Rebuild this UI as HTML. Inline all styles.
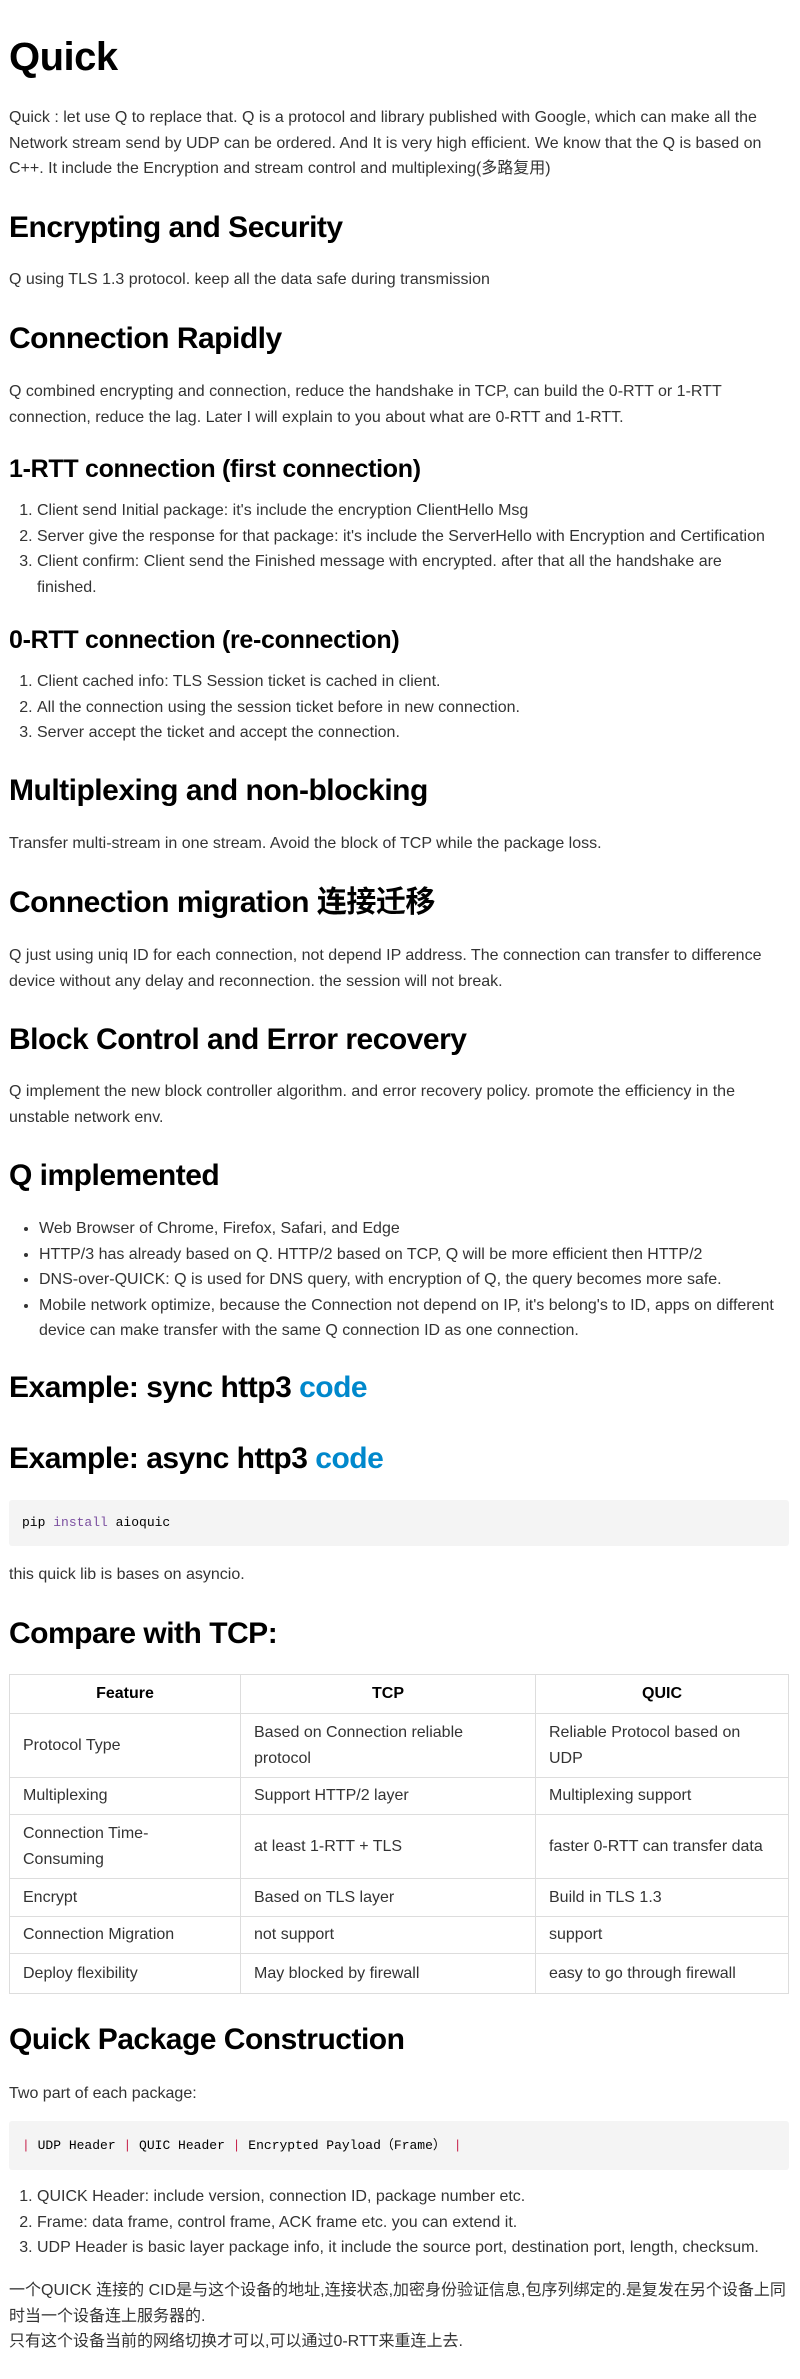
<!DOCTYPE html>
<html><head><meta charset="utf-8"><style>
*{margin:0;padding:0;box-sizing:border-box}
html,body{width:800px;height:2379px;background:#fff;overflow:hidden}
body{position:relative;font-family:"Liberation Sans","Noto Sans CJK SC",sans-serif;color:#333;font-size:16px;line-height:25.5px}
.b{position:absolute;left:9px;width:780px}
h1{font-size:40px;line-height:48px;color:#000;font-weight:bold;letter-spacing:-0.5px}
h2{font-size:30px;line-height:36px;color:#000;font-weight:bold;letter-spacing:-0.5px}
h3{font-size:25px;line-height:30px;color:#000;font-weight:bold;letter-spacing:-0.3px}
a{color:#0088cc;text-decoration:none}
ol,ul{padding-left:28px}
ul{padding-left:30px}
.code{position:absolute;left:9px;width:780px;background:#f4f4f4;border-radius:3px;font-family:"Liberation Mono","Noto Sans CJK SC",monospace;font-size:13px;color:#000;padding-left:13px}
.kw{color:#7b4fa0}
.p{color:#c7254e}
table{position:absolute;left:9px;top:1674px;width:780px;border-collapse:collapse;table-layout:fixed}
td,th{border:1.5px solid #ddd;padding:0 13px;vertical-align:middle}
th{color:#000;text-align:center;height:39px}
</style></head><body>
<h1 class="b" style="top:33px">Quick</h1>
<p class="b" style="top:105px">Quick : let use Q to replace that. Q is a protocol and library published with Google, which can make all the Network stream send by UDP can be ordered. And It is very high efficient. We know that the Q is based on C++. It include the Encryption and stream control and multiplexing(多路复用)</p>
<h2 class="b" style="top:210px">Encrypting and Security</h2>
<p class="b" style="top:267px">Q using TLS 1.3 protocol. keep all the data safe during transmission</p>
<h2 class="b" style="top:321px">Connection Rapidly</h2>
<p class="b" style="top:379px">Q combined encrypting and connection, reduce the handshake in TCP, can build the 0-RTT or 1-RTT connection, reduce the lag. Later I will explain to you about what are 0-RTT and 1-RTT.</p>
<h3 class="b" style="top:454px">1-RTT connection (first connection)</h3>
<ol class="b" style="top:498px;width:765px">
<li>Client send Initial package: it's include the encryption ClientHello Msg</li>
<li>Server give the response for that package: it's include the ServerHello with Encryption and Certification</li>
<li>Client confirm: Client send the Finished message with encrypted. after that all the handshake are finished.</li>
</ol>
<h3 class="b" style="top:625px">0-RTT connection (re-connection)</h3>
<ol class="b" style="top:669px">
<li>Client cached info: TLS Session ticket is cached in client.</li>
<li>All the connection using the session ticket before in new connection.</li>
<li>Server accept the ticket and accept the connection.</li>
</ol>
<h2 class="b" style="top:773px">Multiplexing and non-blocking</h2>
<p class="b" style="top:831px">Transfer multi-stream in one stream. Avoid the block of TCP while the package loss.</p>
<h2 class="b" style="top:885px">Connection migration 连接迁移</h2>
<p class="b" style="top:943px">Q just using uniq ID for each connection, not depend IP address. The connection can transfer to difference device without any delay and reconnection. the session will not break.</p>
<h2 class="b" style="top:1022px">Block Control and Error recovery</h2>
<p class="b" style="top:1079px">Q implement the new block controller algorithm. and error recovery policy. promote the efficiency in the unstable network env.</p>
<h2 class="b" style="top:1158px">Q implemented</h2>
<ul class="b" style="top:1216px">
<li>Web Browser of Chrome, Firefox, Safari, and Edge</li>
<li>HTTP/3 has already based on Q. HTTP/2 based on TCP, Q will be more efficient then HTTP/2</li>
<li>DNS-over-QUICK: Q is used for DNS query, with encryption of Q, the query becomes more safe.</li>
<li>Mobile network optimize, because the Connection not depend on IP, it's belong's to ID, apps on different device can make transfer with the same Q connection ID as one connection.</li>
</ul>
<h2 class="b" style="top:1370px">Example: sync http3 <a>code</a></h2>
<h2 class="b" style="top:1441px">Example: async http3 <a>code</a></h2>
<div class="code" style="top:1500px;height:46px;line-height:46px">pip <span class="kw">install</span> aioquic</div>
<p class="b" style="top:1562px">this quick lib is bases on asyncio.</p>
<h2 class="b" style="top:1616px">Compare with TCP:</h2>
<table>
<colgroup><col style="width:231px"><col style="width:295px"><col></colgroup>
<tr><th>Feature</th><th>TCP</th><th>QUIC</th></tr>
<tr style="height:64px"><td>Protocol Type</td><td>Based on Connection reliable protocol</td><td>Reliable Protocol based on UDP</td></tr>
<tr style="height:37px"><td>Multiplexing</td><td>Support HTTP/2 layer</td><td>Multiplexing support</td></tr>
<tr style="height:64px"><td>Connection Time-Consuming</td><td>at least 1-RTT + TLS</td><td>faster 0-RTT can transfer data</td></tr>
<tr style="height:38px"><td>Encrypt</td><td>Based on TLS layer</td><td>Build in TLS 1.3</td></tr>
<tr style="height:37px"><td>Connection Migration</td><td>not support</td><td>support</td></tr>
<tr style="height:40px"><td>Deploy flexibility</td><td>May blocked by firewall</td><td>easy to go through firewall</td></tr>
</table>
<h2 class="b" style="top:2022px">Quick Package Construction</h2>
<p class="b" style="top:2081px">Two part of each package:</p>
<div class="code" style="top:2121px;height:49px;line-height:49px"><span class="p">|</span> UDP Header <span class="p">|</span> QUIC Header <span class="p">|</span> Encrypted Payload（Frame） <span class="p">|</span></div>
<ol class="b" style="top:2184px">
<li>QUICK Header: include version, connection ID, package number etc.</li>
<li>Frame: data frame, control frame, ACK frame etc. you can extend it.</li>
<li>UDP Header is basic layer package info, it include the source port, destination port, length, checksum.</li>
</ol>
<p class="b" style="top:2278px">一个QUICK 连接的 CID是与这个设备的地址,连接状态,加密身份验证信息,包序列绑定的.是复发在另个设备上同时当一个设备连上服务器的.<br>只有这个设备当前的网络切换才可以,可以通过0-RTT来重连上去.</p>
</body></html>
